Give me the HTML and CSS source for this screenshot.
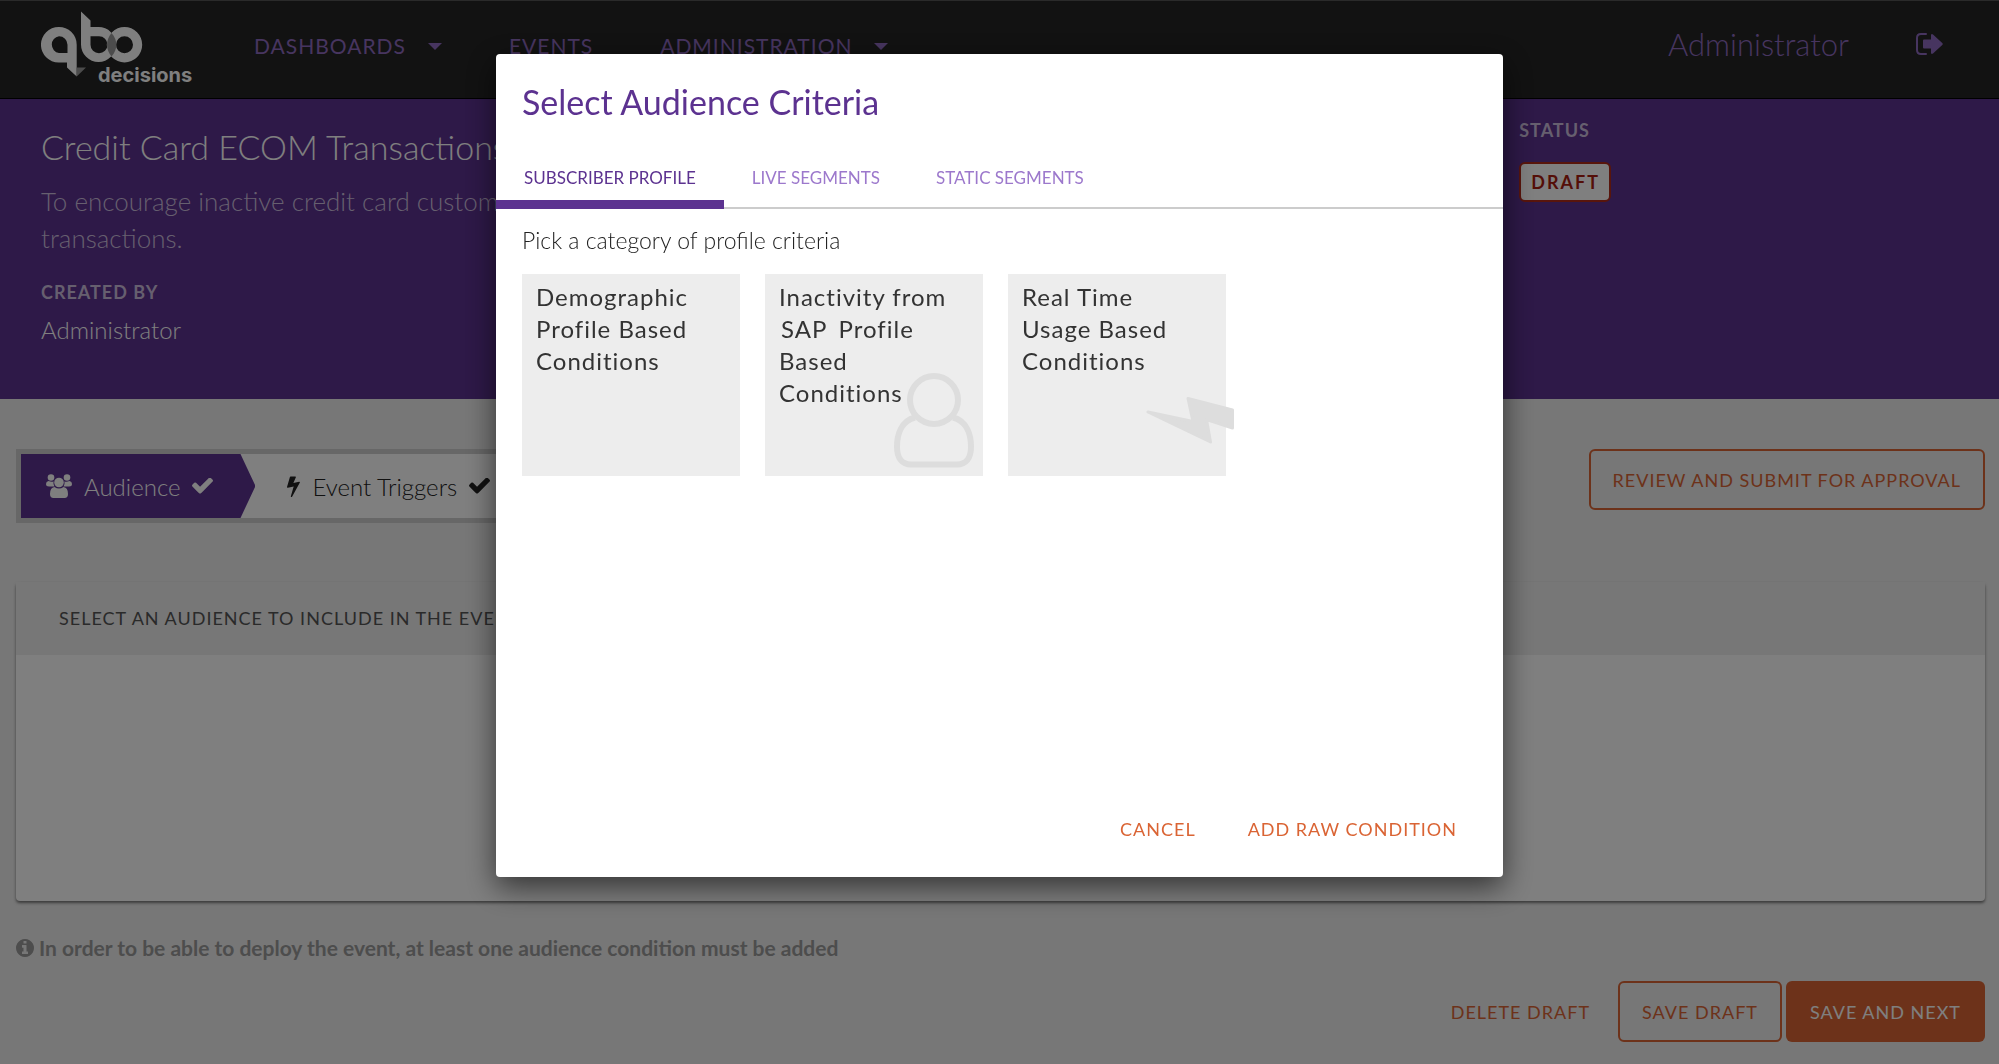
FILE: index.html
```
<!DOCTYPE html>
<html lang="en">
<head>
<meta charset="utf-8">
<title>qbo decisions</title>
<link rel="stylesheet" href="styles.css">
</head>
<body>
<header class="navbar">
  <a class="logo" href="#" aria-label="qbo decisions">
    <svg width="156" height="76" viewBox="0 0 156 76">
      <path fill="#fff" fill-rule="evenodd" d="M17.700 18A17.700 17.700 0 0 0 17.700 53.500H26V58.500L35.700 67.500V35.700A17.700 17.700 0 0 0 17.700 18ZM18 27.200A8.500 8.500 0 0 1 26.500 35.700V44H18A8.500 8.500 0 0 1 18 27.200Z"/>
      <path fill="#999" d="M35.700 58.500H45L35.700 67.500Z"/>
      <path fill="#fff" fill-rule="evenodd" d="M40 2.500L49.500 11.500V18H57.500A17.500 17.500 0 1 1 40 35.500ZM49.500 27.200V35.700A8.500 8.500 0 1 0 58 27.200Z"/>
      <path fill="#fff" fill-rule="evenodd" d="M83.500 18a17.500 17.500 0 1 1 0 35.400a17.500 17.500 0 1 1 0-35.400ZM83.500 27.200a8.500 8.500 0 1 0 0 17a8.500 8.500 0 1 0 0-17Z"/>
      <path fill="#999" d="M70.500 24C77 31 77 40.500 70.500 47.500C64.500 40.500 64.500 31 70.500 24Z"/>
      <text class="logo-text" x="57" y="73">decisions</text>
    </svg>
  </a>
  <nav class="menu">
    <a class="menu-link" href="#">DASHBOARDS <span class="caret"></span></a>
    <a class="menu-link" href="#">EVENTS</a>
    <a class="menu-link" href="#">ADMINISTRATION <span class="caret"></span></a>
  </nav>
  <div class="account">
    <a class="user" href="#">Administrator</a>
    <a class="signout" href="#" aria-label="Sign out">
      <svg width="27" height="22" viewBox="0 0 27 22"><path fill="none" stroke="currentColor" stroke-width="2" stroke-linecap="round" d="M10 1H5Q1 1 1 5V17Q1 21 5 21H10"/><path fill="currentColor" d="M8 6.500H15V2Q15.500 0.500 17 1.500L26.500 10.300Q27 11 26.500 11.700L17 20.500Q15.500 21.500 15 20V15.500H8Q7 15.500 7 14.500V7.500Q7 6.500 8 6.500Z"/></svg>
    </a>
  </div>
</header>

<section class="hero">
  <div class="hero-main">
    <h1 class="hero-title">Credit Card ECOM Transactions</h1>
    <p class="hero-desc">To encourage inactive credit card customers<br>transactions.</p>
    <h2 class="label label-created">CREATED BY</h2>
    <p class="author">Administrator</p>
  </div>
  <div class="hero-side">
    <h2 class="label">STATUS</h2>
    <span class="badge">DRAFT</span>
  </div>
</section>

<main class="content">
  <div class="steps-row">
    <div class="steps">
      <a class="step step-active" href="#">
        <svg width="26" height="24" viewBox="0 0 26 24" fill="currentColor"><circle cx="5" cy="3.500" r="3.300"/><circle cx="21" cy="3.500" r="3.300"/><path d="M2.500 7Q6 8.500 7.500 7.300Q7 10 8.500 12.500H3Q0 12.500 0 10Q0 7.500 2.500 7ZM23.500 7Q20 8.500 18.500 7.300Q19 10 17.500 12.500H23Q26 12.500 26 10Q26 7.500 23.500 7Z"/><circle cx="13" cy="8.500" r="4.800"/><path d="M8.500 13Q13 16 17.500 13Q22 13.500 22 20Q22 24 18.500 24H7.500Q4 24 4 20Q4 13.500 8.500 13Z"/></svg>
        Audience
        <svg width="21" height="16" viewBox="121 398 1550 1124" fill="currentColor"><path d="M1671 566q0 40-28 68l-724 724-136 136q-28 28-68 28t-68-28l-136-136-362-362q-28-28-28-68t28-68l136-136q28-28 68-28t68 28l294 295 656-657q28-28 68-28t68 28l136 136q28 28 28 68z"/></svg>
      </a>
      <a class="step" href="#">
        <svg width="13" height="22" viewBox="448 0 900 1792" preserveAspectRatio="none" fill="currentColor"><path d="M1333 566q18 20 7 44l-540 1157q-13 25-42 25-4 0-14-2-17-5-25.500-19t-4.500-30l197-808-406 101q-4 1-12 1-18 0-31-11-18-15-13-39l201-825q4-14 16-23t28-9h328q19 0 32 12.500t13 29.500q0 8-5 18l-171 463 396-98q8-2 12-2 19 0 34 15z"/></svg>
        Event Triggers
        <svg width="21" height="16" viewBox="121 398 1550 1124" fill="currentColor"><path d="M1671 566q0 40-28 68l-724 724-136 136q-28 28-68 28t-68-28l-136-136-362-362q-28-28-28-68t28-68l136-136q28-28 68-28t68 28l294 295 656-657q28-28 68-28t68 28l136 136q28 28 28 68z"/></svg>
      </a>
    </div>
    <button class="btn btn-outline" type="button">REVIEW AND SUBMIT FOR APPROVAL</button>
  </div>

  <section class="panel">
    <h2 class="panel-head">SELECT AN AUDIENCE TO INCLUDE IN THE EVENT</h2>
    <div class="panel-body"></div>
  </section>

  <p class="note">
    <svg width="18" height="18" viewBox="128 128 1536 1536" fill="currentColor"><path d="M1152 1376v-160q0-14-9-23t-23-9h-96v-512q0-14-9-23t-23-9h-320q-14 0-23 9t-9 23v160q0 14 9 23t23 9h96v320h-96q-14 0-23 9t-9 23v160q0 14 9 23t23 9h448q14 0 23-9t9-23zm-128-896v-160q0-14-9-23t-23-9h-192q-14 0-23 9t-9 23v160q0 14 9 23t23 9h192q14 0 23-9t9-23zm640 416q0 209-103 385.500t-279.500 279.500-385.500 103-385.500-103-279.500-279.500-103-385.500 103-385.500 279.500-279.500 385.500-103 385.500 103 279.500 279.500 103 385.500z"/></svg>
    In order to be able to deploy the event, at least one audience condition must be added
  </p>

  <div class="actions">
    <button class="btn" type="button">DELETE DRAFT</button>
    <button class="btn btn-outline" type="button">SAVE DRAFT</button>
    <button class="btn btn-solid" type="button">SAVE AND NEXT</button>
  </div>
</main>

<div class="overlay">
  <div class="modal" role="dialog" aria-modal="true" aria-labelledby="modal-title">
    <h2 class="modal-title" id="modal-title">Select Audience Criteria</h2>
    <div class="tabs" role="tablist">
      <button class="tab tab-active" type="button" role="tab" aria-selected="true">SUBSCRIBER PROFILE</button>
      <button class="tab" type="button" role="tab" aria-selected="false">LIVE SEGMENTS</button>
      <button class="tab" type="button" role="tab" aria-selected="false">STATIC SEGMENTS</button>
    </div>
    <div class="modal-body">
      <p class="hint">Pick a category of profile criteria</p>
      <div class="cards">
        <button class="card" type="button">Demographic Profile Based Conditions</button>
        <button class="card" type="button">
          <svg class="card-person" width="80" height="95" viewBox="0 0 80 95" fill="none" stroke="#dddddd" stroke-width="6"><circle cx="40" cy="27" r="24"/><path d="M21 44.500C7 48 3 62 3 74C3 85 8 91.500 17 91.500H63C72 91.500 77 85 77 74C77 62 73 48 59 44.500"/></svg>
          <span class="card-text">Inactivity from <span class="sap">SAP</span> Profile Based Conditions</span>
        </button>
        <button class="card" type="button">
          <svg class="card-bolt" width="88" height="48" viewBox="0 0 88 48" fill="#dddddd" stroke="#dddddd" stroke-width="3" stroke-linejoin="round"><path d="M42 2.500L86.500 14V32L60.500 23.500L64.500 46L2 16L47 25.500Z"/></svg>
          <span class="card-text">Real Time Usage Based Conditions</span>
        </button>
      </div>
    </div>
    <div class="modal-foot">
      <button class="btn" type="button">CANCEL</button>
      <button class="btn" type="button">ADD RAW CONDITION</button>
    </div>
  </div>
</div>
</body>
</html>
```
FILE: styles.css
```
* { box-sizing: border-box; }

body {
  margin: 0;
  background: #eeeeee;
  color: #222222;
  font-family: Lato, "Open Sans", sans-serif;
}

h1, h2, p { margin: 0; font-weight: 400; }
a { color: inherit; text-decoration: none; }
button { font-family: inherit; cursor: pointer; }

/* Top bar */
.navbar {
  display: flex;
  align-items: flex-start;
  min-height: 99px;
  padding: 8px 56px 0 41px;
  background: #242424;
  border-top: 1px solid #555555;
  border-bottom: 1px solid #000000;
  color: #8f6bc0;
}
.logo { display: block; line-height: 0; }
.logo-text { font: 700 20px Inter, sans-serif; fill: #ffffff; }
.menu { display: flex; gap: 67px; padding-left: 57px; }
.menu-link {
  display: flex;
  align-items: center;
  gap: 22px;
  font-size: 21px;
  letter-spacing: 1px;
  line-height: 74px;
}
.caret {
  border: 7px solid transparent;
  border-top-color: currentColor;
  border-bottom: 0;
}
.account {
  display: flex;
  align-items: center;
  gap: 67px;
  margin-left: auto;
  font-size: 31px;
  font-weight: 300;
  line-height: 70px;
}
.signout { display: flex; }

/* Event summary */
.hero {
  display: grid;
  grid-template-columns: 76% 24%;
  min-height: 300px;
  background: #5c3290;
  color: #ffffff;
}
.hero-main { padding: 28px 0 0 41px; }
.hero-side { padding-top: 19px; }
.hero-title { font-size: 34px; font-weight: 300; line-height: 40px; }
.hero-desc {
  margin-top: 16px;
  color: #cdbfde;
  font-size: 26px;
  font-weight: 300;
  line-height: 37px;
}
.label {
  color: #cdbfde;
  font-size: 18px;
  font-weight: 700;
  letter-spacing: 1px;
  line-height: 24px;
}
.label-created { margin-top: 23px; }
.author { margin-top: 11px; font-size: 24px; font-weight: 300; line-height: 30px; }
.badge {
  display: inline-block;
  margin-top: 20px;
  padding: 0 9px 0 10px;
  border: 2px solid #b02a18;
  border-radius: 6px;
  background: #ffffff;
  color: #a81c10;
  font-size: 18px;
  font-weight: 700;
  letter-spacing: 2px;
  line-height: 36px;
}

/* Steps */
.content { padding: 50px 14px 20px 16px; }
.steps-row { display: flex; justify-content: space-between; align-items: flex-start; }
.steps { display: flex; border: 5px solid #cfcfcf; background: #ffffff; }
.step {
  display: flex;
  align-items: center;
  gap: 12px;
  height: 64px;
  padding: 0 30px 0 32px;
  font-size: 24px;
  font-weight: 300;
}
.step-active {
  padding-left: 25px;
  padding-right: 42px;
  background: #5c3290;
  clip-path: polygon(0 0, calc(100% - 15px) 0, 100% 50%, calc(100% - 15px) 100%, 0 100%);
  color: #ffffff;
}

/* Buttons */
.btn {
  min-height: 61px;
  padding: 0 22px;
  border: 2px solid transparent;
  border-radius: 6px;
  background: transparent;
  color: #da6434;
  font-size: 18px;
  letter-spacing: 1px;
}
.btn-outline { border-color: #da6434; }
.btn-solid { background: #da6434; color: #ffffff; }

/* Panel */
.panel {
  margin-top: 59px;
  border-radius: 4px;
  background: #ffffff;
  box-shadow: 0 2px 3px rgba(0, 0, 0, .5);
}
.panel-head {
  padding: 0 43px;
  background: #eeeeee;
  color: #555555;
  font-size: 18px;
  letter-spacing: 1px;
  line-height: 73px;
}
.panel-body { min-height: 246px; }

.note {
  display: flex;
  align-items: center;
  gap: 5px;
  margin-top: 34px;
  color: #9a9a9a;
  font-size: 21px;
  font-weight: 700;
  line-height: 26px;
}
.actions { display: flex; justify-content: flex-end; gap: 4px; margin-top: 20px; }

/* Dialog */
.overlay {
  position: fixed;
  inset: 0;
  display: flex;
  justify-content: center;
  align-items: flex-start;
  padding-top: 54px;
  background: rgba(0, 0, 0, .5);
}
.modal {
  width: 90%;
  max-width: 1007px;
  border-radius: 4px;
  background: #ffffff;
  box-shadow: 0 10px 30px rgba(0, 0, 0, .6);
}
.modal-title {
  padding: 26px 26px 0;
  color: #5c3290;
  font-size: 34px;
  line-height: 44px;
}
.tabs { display: flex; margin-top: 30px; box-shadow: inset 0 -2px #cccccc; }
.tab {
  padding: 12px 28px 10px;
  border: 0;
  border-bottom: 9px solid transparent;
  background: transparent;
  color: #9c78cc;
  font-size: 17px;
  line-height: 24px;
}
.tab-active { border-bottom-color: #5c3290; color: #5c3290; }
.modal-body { min-height: 589px; padding: 16px 26px 0; }
.hint { color: #222222; font-size: 23px; font-weight: 300; line-height: 30px; }
.cards { display: flex; flex-wrap: wrap; gap: 25px; margin-top: 19px; }
.card {
  position: relative;
  display: flex;
  width: 218px;
  height: 202px;
  padding: 7px 20px 7px 14px;
  border: 0;
  background: #ededed;
  color: #333333;
  font-size: 24px;
  letter-spacing: 1px;
  line-height: 32px;
  text-align: left;
}
.card-text { position: relative; }
.sap { padding: 0 4px 0 2px; }
.card-person { position: absolute; right: 9px; bottom: 8px; }
.card-bolt { position: absolute; right: -8px; bottom: 32px; }
.modal-foot { display: flex; justify-content: flex-end; gap: 4px; padding: 0 22px 18px; }
```
